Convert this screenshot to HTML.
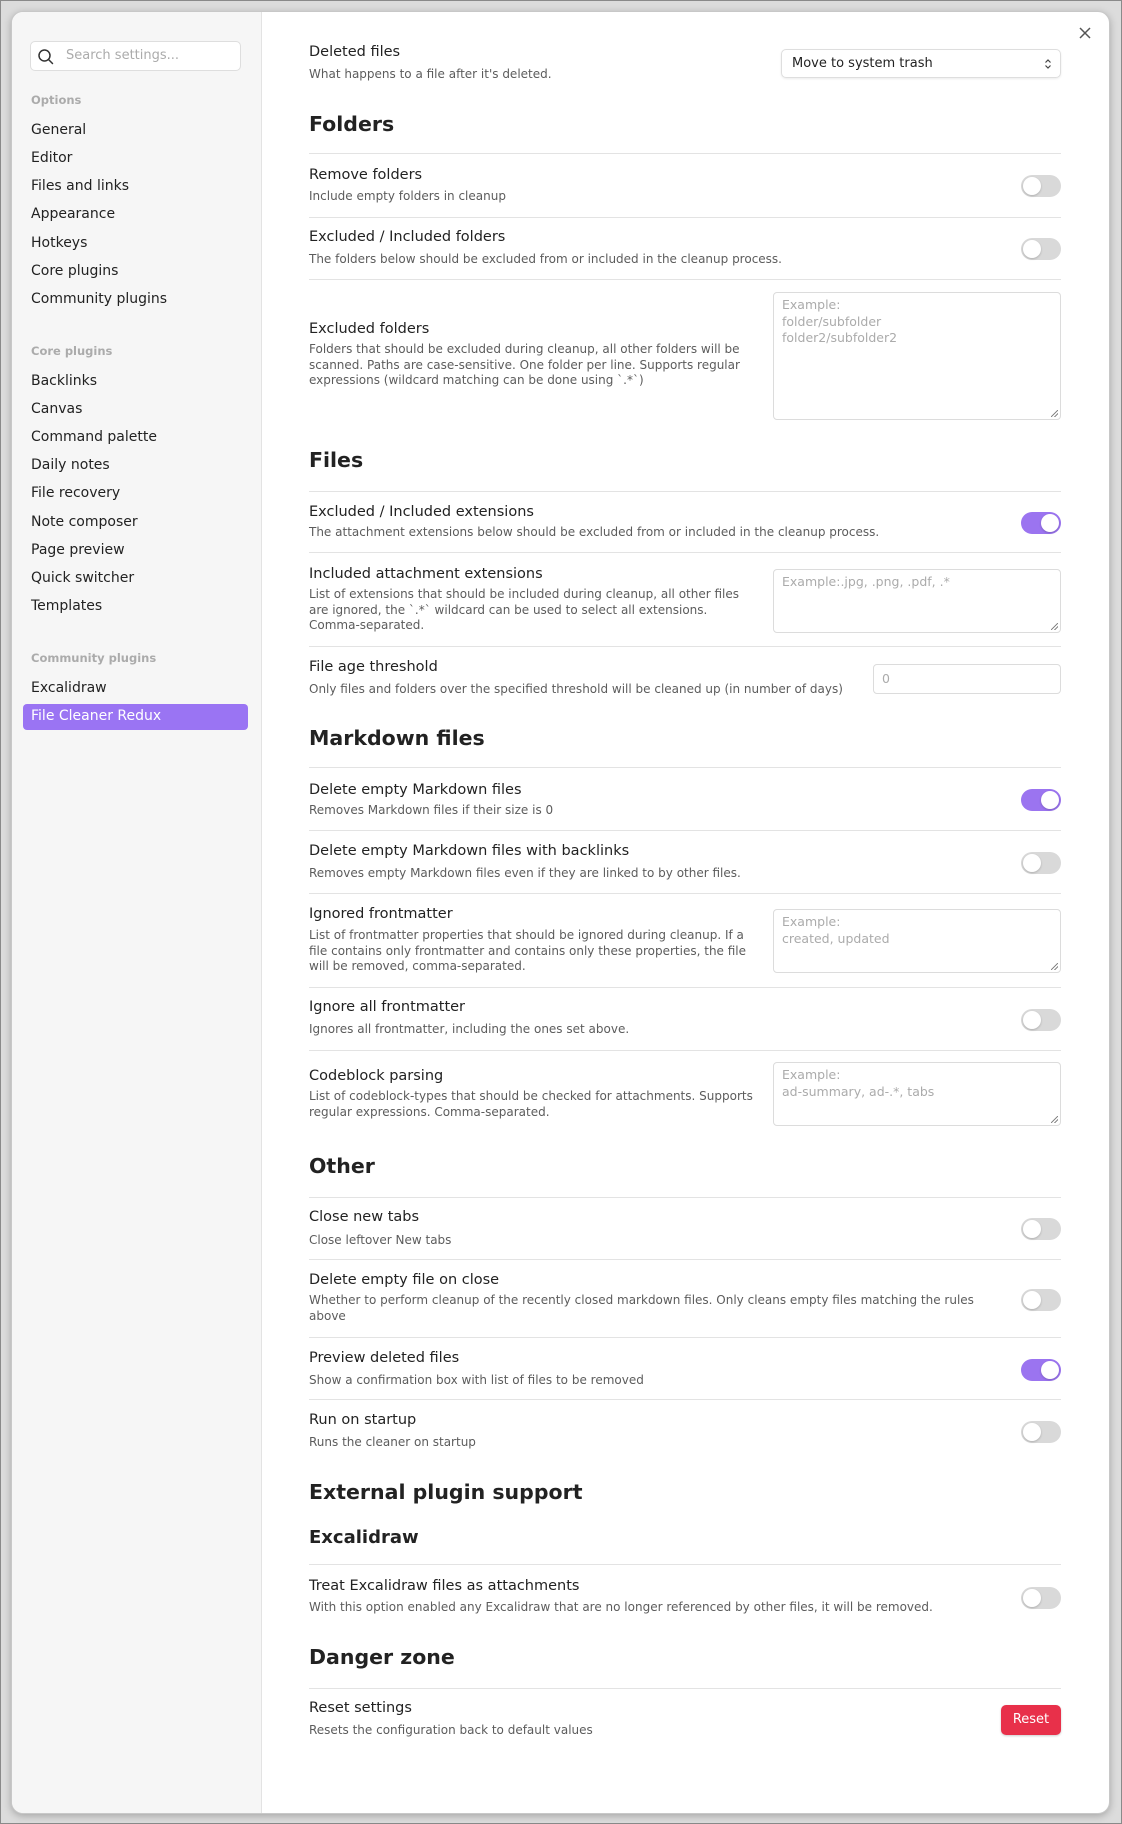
<!DOCTYPE html>
<html><head><meta charset="utf-8"><style>
*{box-sizing:border-box;margin:0;padding:0}
html,body{width:1122px;height:1824px;overflow:hidden}
body{background:#dcdcdc;font-family:"DejaVu Sans","Liberation Sans",sans-serif;position:relative;border:1px solid #8a8a8a}
.modal{position:absolute;left:10px;top:10px;width:1099px;height:1803px;background:#fff;border-radius:12px;box-shadow:0 2px 8px rgba(0,0,0,.25);border:1px solid #c8c8c8;overflow:hidden}
.side{position:absolute;left:0;top:0;width:250px;height:100%;background:#f6f6f6;border-right:1px solid #e3e3e3}
.a{position:absolute;white-space:nowrap}
.si{font-size:14px;color:#222;line-height:20px;left:19px}
.sh{font-size:11.5px;font-weight:bold;color:#ababab;line-height:16px;left:19px}
.n{font-size:14.5px;color:#222;line-height:20px;left:297px}
.d{font-size:12px;color:#5c5c5c;line-height:16px;left:297px}
.h{font-size:20.5px;font-weight:bold;color:#222;line-height:28px;left:297px}
.ln{position:absolute;left:297px;width:752px;height:1px;background:#e3e3e3}
.tg{position:absolute;left:1009px;width:40px;height:22px;border-radius:11px;background:#d9d9d9}
.tg::after{content:"";position:absolute;left:2px;top:2px;width:18px;height:18px;border-radius:50%;background:#fff;box-shadow:0 1px 2px rgba(0,0,0,.2)}
.tg.on{background:#9b74f0}
.tg.on::after{left:20px}
.ta{position:absolute;border:1px solid #dcdcdc;border-radius:4px;background:#fff;font-size:12.5px;color:#ababab;line-height:16.5px;padding:4px 8px}
.ta.r::after{content:"";position:absolute;right:2px;bottom:2px;width:7px;height:7px;background:linear-gradient(135deg,transparent 45%,#888 45%,#888 55%,transparent 55%,transparent 70%,#888 70%,#888 80%,transparent 80%)}
</style></head><body>
<div class="modal">
<div class="side">
<div class="a" style="left:18px;top:29px;width:211px;height:30px;border:1px solid #dedede;border-radius:5px;background:#fff"></div>
<svg class="a" style="left:25px;top:36px" width="18" height="18" viewBox="0 0 18 18"><circle cx="7.5" cy="7.5" r="5.5" fill="none" stroke="#333" stroke-width="1.5"/><line x1="11.5" y1="11.5" x2="15.5" y2="15.5" stroke="#333" stroke-width="1.5" stroke-linecap="round"/></svg>
<div class="a" style="left:54px;top:35px;font-size:13px;color:#ababab;line-height:18px">Search settings...</div>
<div class="a sh" style="top:80px">Options</div>
<div class="a si" style="top:108px">General</div>
<div class="a si" style="top:136px">Editor</div>
<div class="a si" style="top:164px">Files and links</div>
<div class="a si" style="top:192px">Appearance</div>
<div class="a si" style="top:221px">Hotkeys</div>
<div class="a si" style="top:249px">Core plugins</div>
<div class="a si" style="top:277px">Community plugins</div>
<div class="a sh" style="top:331px">Core plugins</div>
<div class="a si" style="top:359px">Backlinks</div>
<div class="a si" style="top:387px">Canvas</div>
<div class="a si" style="top:415px">Command palette</div>
<div class="a si" style="top:443px">Daily notes</div>
<div class="a si" style="top:471px">File recovery</div>
<div class="a si" style="top:500px">Note composer</div>
<div class="a si" style="top:528px">Page preview</div>
<div class="a si" style="top:556px">Quick switcher</div>
<div class="a si" style="top:584px">Templates</div>
<div class="a sh" style="top:638px">Community plugins</div>
<div class="a si" style="top:666px">Excalidraw</div>
<div class="a" style="left:11px;top:692px;width:225px;height:26px;border-radius:4px;background:#9a74f3"></div>
<div class="a si" style="top:694px;color:#fff">File Cleaner Redux</div>
</div>
<svg class="a" style="left:1066px;top:14px" width="14" height="14" viewBox="0 0 14 14"><path d="M2 2L12 12M12 2L2 12" stroke="#555" stroke-width="1.5"/></svg>

<div class="a n" style="top:30px">Deleted files</div>
<div class="a d" style="top:54px">What happens to a file after it's deleted.</div>
<div class="a" style="left:769px;top:37px;width:280px;height:29px;border:1px solid #dedede;border-radius:5px;box-shadow:0 1px 2px rgba(0,0,0,.08);font-size:13px;color:#222;line-height:27px;padding-left:10px">Move to system trash<svg style="position:absolute;right:8px;top:9px" width="8" height="10" viewBox="0 0 8 10"><path d="M1.5 3.5L4 1L6.5 3.5M1.5 6.5L4 9L6.5 6.5" fill="none" stroke="#444" stroke-width="1.2"/></svg></div>

<div class="a h" style="top:98px">Folders</div>
<div class="ln" style="top:141px"></div>
<div class="a n" style="top:153px">Remove folders</div>
<div class="a d" style="top:176px">Include empty folders in cleanup</div>
<div class="tg" style="top:163px"></div>
<div class="ln" style="top:205px"></div>
<div class="a n" style="top:215px">Excluded / Included folders</div>
<div class="a d" style="top:239px">The folders below should be excluded from or included in the cleanup process.</div>
<div class="tg" style="top:226px"></div>
<div class="ln" style="top:267px"></div>
<div class="a n" style="top:307px">Excluded folders</div>
<div class="a d" style="top:330px;line-height:15.5px">Folders that should be excluded during cleanup, all other folders will be<br>scanned. Paths are case-sensitive. One folder per line. Supports regular<br>expressions (wildcard matching can be done using `.*`)</div>
<div class="ta r" style="left:761px;top:280px;width:288px;height:128px">Example:<br>folder/subfolder<br>folder2/subfolder2</div>

<div class="a h" style="top:434px">Files</div>
<div class="ln" style="top:479px"></div>
<div class="a n" style="top:490px">Excluded / Included extensions</div>
<div class="a d" style="top:512px">The attachment extensions below should be excluded from or included in the cleanup process.</div>
<div class="tg on" style="top:500px"></div>
<div class="ln" style="top:540px"></div>
<div class="a n" style="top:552px">Included attachment extensions</div>
<div class="a d" style="top:575px;line-height:15.5px">List of extensions that should be included during cleanup, all other files<br>are ignored, the `.*` wildcard can be used to select all extensions.<br>Comma-separated.</div>
<div class="ta r" style="left:761px;top:557px;width:288px;height:64px">Example:.jpg, .png, .pdf, .*</div>
<div class="ln" style="top:634px"></div>
<div class="a n" style="top:645px">File age threshold</div>
<div class="a d" style="top:669px">Only files and folders over the specified threshold will be cleaned up (in number of days)</div>
<div class="ta" style="left:861px;top:652px;width:188px;height:30px;line-height:20px">0</div>

<div class="a h" style="top:712px">Markdown files</div>
<div class="ln" style="top:755px"></div>
<div class="a n" style="top:768px">Delete empty Markdown files</div>
<div class="a d" style="top:790px">Removes Markdown files if their size is 0</div>
<div class="tg on" style="top:777px"></div>
<div class="ln" style="top:818px"></div>
<div class="a n" style="top:829px">Delete empty Markdown files with backlinks</div>
<div class="a d" style="top:853px">Removes empty Markdown files even if they are linked to by other files.</div>
<div class="tg" style="top:840px"></div>
<div class="ln" style="top:881px"></div>
<div class="a n" style="top:892px">Ignored frontmatter</div>
<div class="a d" style="top:916px;line-height:15.5px">List of frontmatter properties that should be ignored during cleanup. If a<br>file contains only frontmatter and contains only these properties, the file<br>will be removed, comma-separated.</div>
<div class="ta r" style="left:761px;top:897px;width:288px;height:64px">Example:<br>created, updated</div>
<div class="ln" style="top:975px"></div>
<div class="a n" style="top:985px">Ignore all frontmatter</div>
<div class="a d" style="top:1009px">Ignores all frontmatter, including the ones set above.</div>
<div class="tg" style="top:997px"></div>
<div class="ln" style="top:1038px"></div>
<div class="a n" style="top:1054px">Codeblock parsing</div>
<div class="a d" style="top:1077px;line-height:15.5px">List of codeblock-types that should be checked for attachments. Supports<br>regular expressions. Comma-separated.</div>
<div class="ta r" style="left:761px;top:1050px;width:288px;height:64px">Example:<br>ad-summary, ad-.*, tabs</div>

<div class="a h" style="top:1140px">Other</div>
<div class="ln" style="top:1185px"></div>
<div class="a n" style="top:1195px">Close new tabs</div>
<div class="a d" style="top:1220px">Close leftover New tabs</div>
<div class="tg" style="top:1206px"></div>
<div class="ln" style="top:1247px"></div>
<div class="a n" style="top:1258px">Delete empty file on close</div>
<div class="a d" style="top:1281px;line-height:15.5px">Whether to perform cleanup of the recently closed markdown files. Only cleans empty files matching the rules<br>above</div>
<div class="tg" style="top:1277px"></div>
<div class="ln" style="top:1325px"></div>
<div class="a n" style="top:1336px">Preview deleted files</div>
<div class="a d" style="top:1360px">Show a confirmation box with list of files to be removed</div>
<div class="tg on" style="top:1347px"></div>
<div class="ln" style="top:1387px"></div>
<div class="a n" style="top:1398px">Run on startup</div>
<div class="a d" style="top:1422px">Runs the cleaner on startup</div>
<div class="tg" style="top:1409px"></div>

<div class="a h" style="top:1466px">External plugin support</div>
<div class="a h" style="top:1512px;font-size:18px">Excalidraw</div>
<div class="ln" style="top:1552px"></div>
<div class="a n" style="top:1564px">Treat Excalidraw files as attachments</div>
<div class="a d" style="top:1587px">With this option enabled any Excalidraw that are no longer referenced by other files, it will be removed.</div>
<div class="tg" style="top:1575px"></div>

<div class="a h" style="top:1631px">Danger zone</div>
<div class="ln" style="top:1676px"></div>
<div class="a n" style="top:1686px">Reset settings</div>
<div class="a d" style="top:1710px">Resets the configuration back to default values</div>
<div class="a" style="left:989px;top:1693px;width:60px;height:30px;border-radius:5px;background:#e8304a;color:#fff;font-size:13px;line-height:30px;text-align:center;box-shadow:0 1px 2px rgba(0,0,0,.2)">Reset</div>
</div>
</body></html>
